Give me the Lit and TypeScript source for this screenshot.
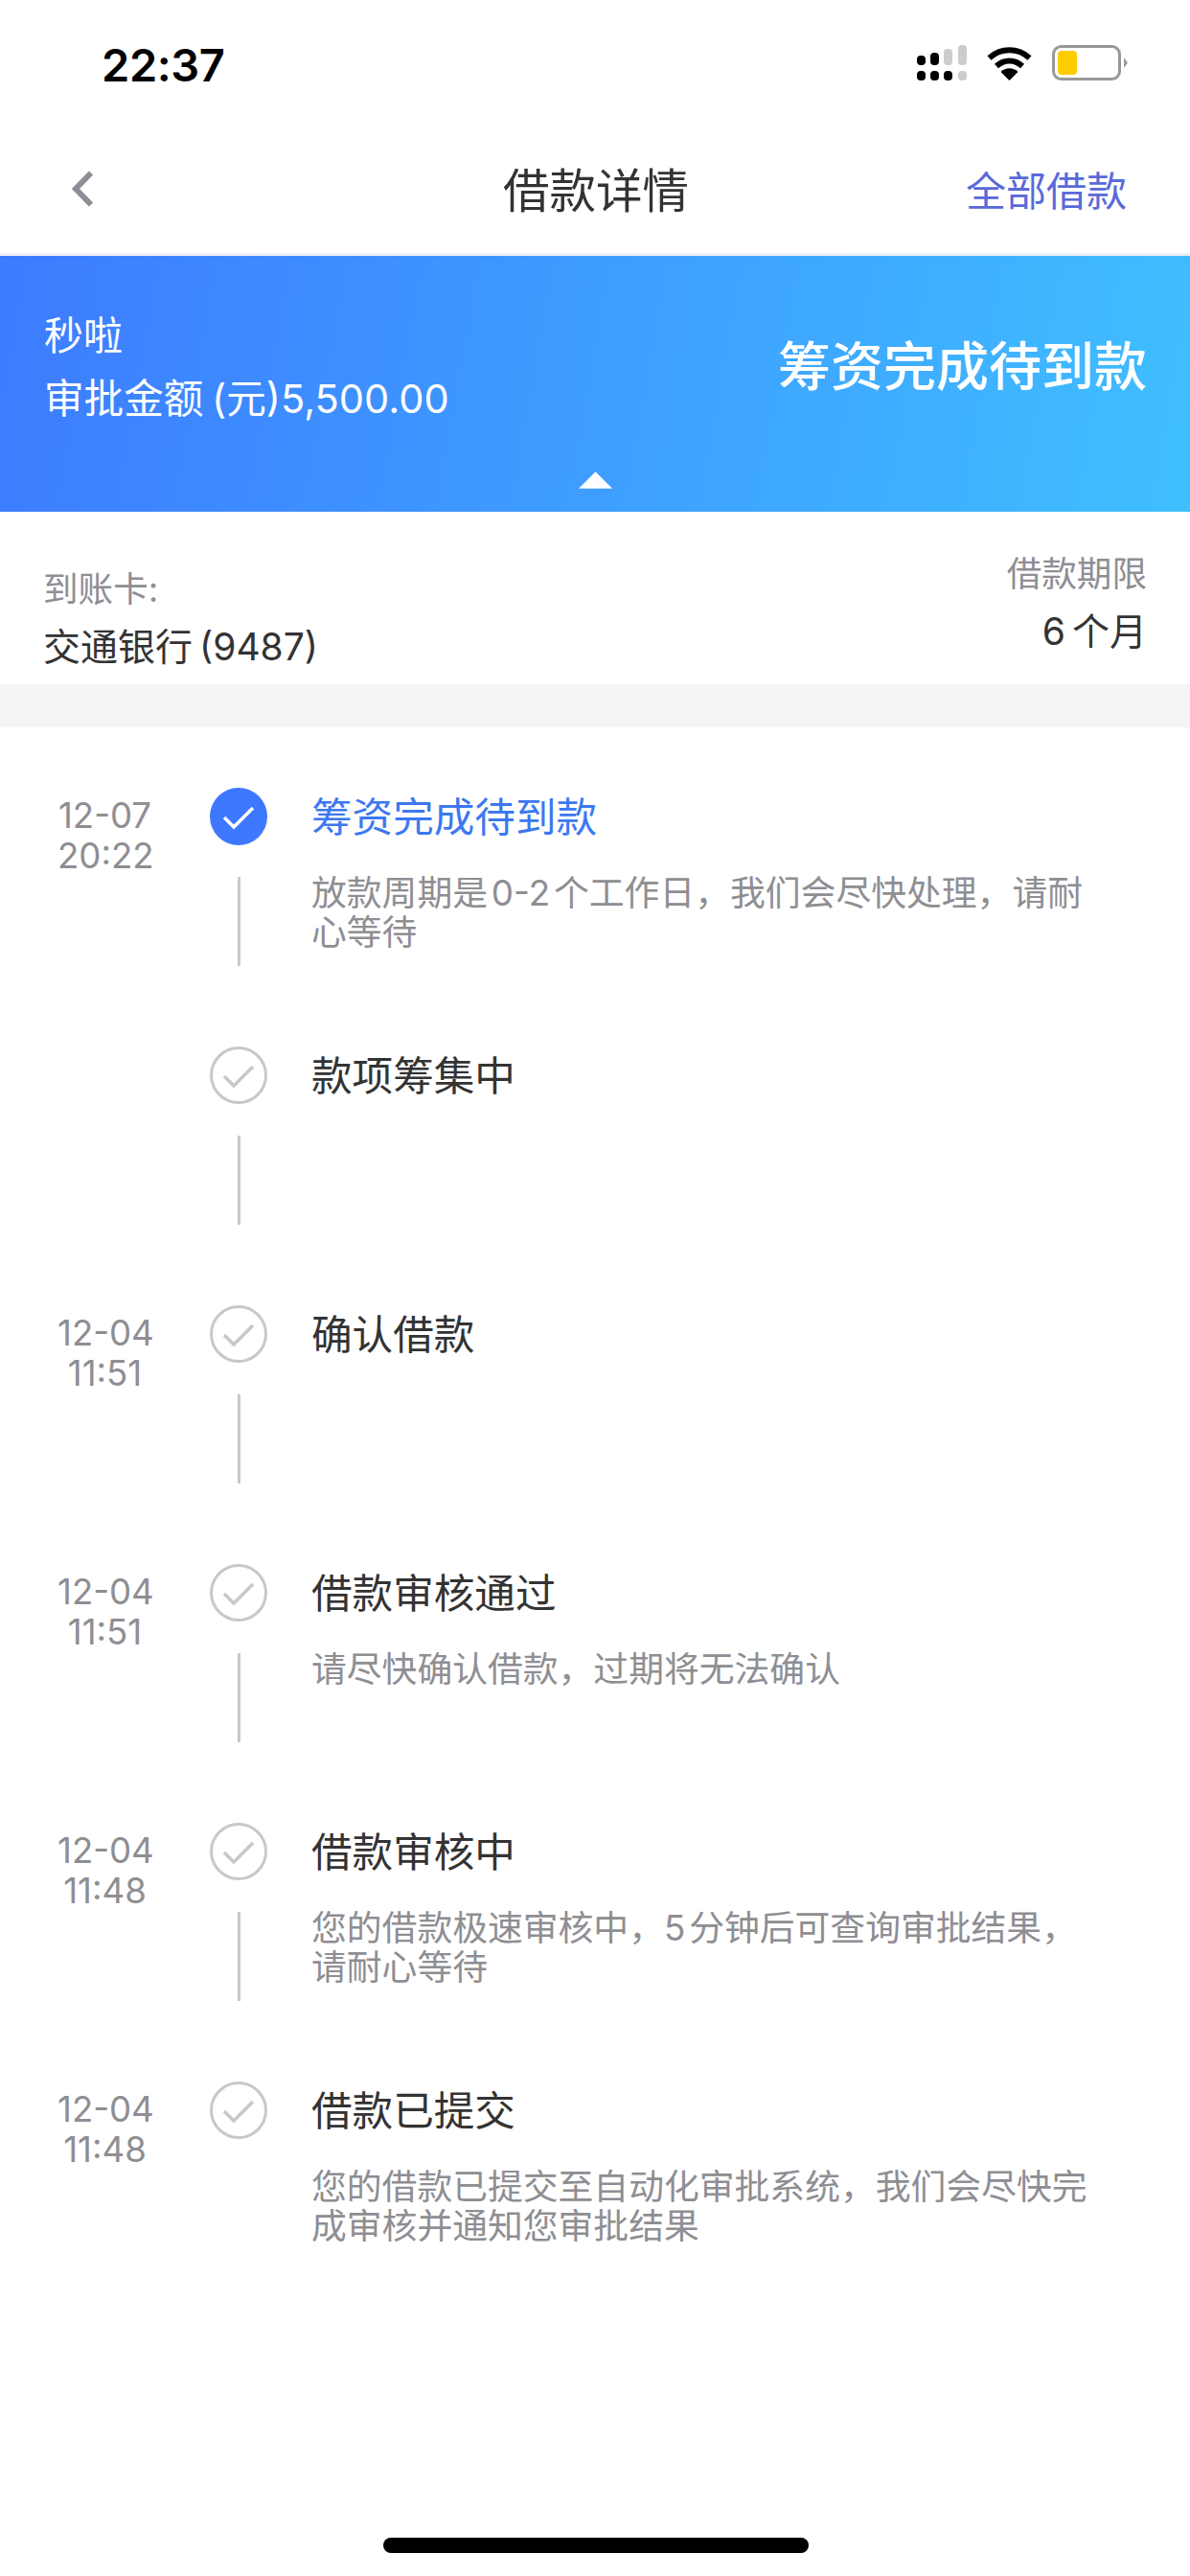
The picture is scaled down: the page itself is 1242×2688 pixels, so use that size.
import { LitElement, html, css, svg } from "lit";
import { customElement } from "lit/decorators.js";

interface Step { date?: string; time?: string; title: string; desc?: string[]; active?: boolean; last?: boolean; }

const STEPS: Step[] = [
  { date: "12-07", time: "20:22", title: "筹资完成待到款", desc: ["放款周期是 0-2 个工作日，我们会尽快处理，请耐", "心等待"], active: true },
  { title: "款项筹集中" },
  { date: "12-04", time: "11:51", title: "确认借款" },
  { date: "12-04", time: "11:51", title: "借款审核通过", desc: ["请尽快确认借款，过期将无法确认"] },
  { date: "12-04", time: "11:48", title: "借款审核中", desc: ["您的借款极速审核中，5 分钟后可查询审批结果，", "请耐心等待"] },
  { date: "12-04", time: "11:48", title: "借款已提交", desc: ["您的借款已提交至自动化审批系统，我们会尽快完", "成审核并通知您审批结果"], last: true },
];

@customElement("app-root")
export class AppRoot extends LitElement {
  static styles = css`
    :host { display: block; width: 1242px; height: 2688px; background: #fff; position: relative; overflow: hidden;
      font-family: Inter, "Noto Sans CJK SC", sans-serif; color: #333; }
    .status { height: 129px; display: flex; align-items: center; justify-content: space-between; padding: 6px 65px 0 106px; box-sizing: border-box; }
    .clock { font: 600 47px Inter, sans-serif; color: #000; letter-spacing: -0.4px; }
    .status-icons { display: flex; align-items: center; gap: 21px; margin-top: -4px; }
    .nav { height: 138px; display: grid; grid-template-columns: 1fr auto 1fr; align-items: center; padding: 0 68px 0 70px; border-bottom: 3px solid #eef0f3; box-sizing: border-box; }
    .back { display: block; margin-left: 2px; }
    .title { font-size: 48.5px; color: #333; margin-top: -2px; }
    .all { justify-self: end; font-size: 42px; color: #5a69d9; margin-right: -2px; }
    .banner { height: 267px; background: linear-gradient(100deg, #3d7bff 0%, #3fbfff 100%); color: #fff; display: flex; justify-content: space-between; align-items: flex-start; padding: 53px 45px 0 46px; box-sizing: border-box; position: relative; }
    .brand { font-size: 41px; line-height: 60px; }
    .amount { font-size: 41.6px; line-height: 60px; margin-top: 6px; word-spacing: -3px; }
    .state { font-size: 55px; font-weight: 500; line-height: 76px; margin-top: 24px; }
    .caret { position: absolute; left: 604px; bottom: 24px; width: 35px; height: 18px; }
    .info { height: 180px; display: flex; justify-content: space-between; padding: 37px 45px 0 45px; box-sizing: border-box; }
    .info-l { padding-top: 19px; }
    .info-r { text-align: right; padding-top: 3px; }
    .label { font-size: 36.6px; color: #8e8e93; line-height: 50px; }
    .value { font-size: 39px; color: #333; line-height: 56px; margin-top: 7px; word-spacing: -4px; }
    .sep { height: 45px; background: #f5f5f5; }
    .timeline { padding-top: 63px; }
    .step { height: 270px; display: grid; grid-template-columns: 129px 60px 1fr; column-gap: 30px; padding-left: 60px; box-sizing: border-box; }
    .when { width: 99px; font-size: 36.6px; line-height: 42px; color: #8e8e93; padding-top: 8px; text-align: center; white-space: nowrap; }
    .rail { display: flex; flex-direction: column; align-items: center; grid-column: 2; }
    .dot { display: block; width: 60px; height: 60px; }
    .line { width: 3px; height: 93px; background: #c8c8c8; margin-top: 33px; }
    .body { margin-left: 16px; }
    .step-title { font-size: 42.6px; line-height: 61px; color: #333; }
    .step.on .step-title { color: #3d78f0; }
    .desc { font-size: 36.8px; line-height: 41px; color: #8e8e93; margin-top: 28px; white-space: nowrap; word-spacing: -6.5px; }
    .home { position: absolute; left: 400px; top: 2648px; width: 444px; height: 16px; border-radius: 8px; background: #000; }
  `;

  private dot(on: boolean) {
    return on
      ? svg`<svg class="dot" viewBox="0 0 60 60"><circle cx="30" cy="30" r="30" fill="#3d78ff"/><path d="M15 31l10 10 20-20" fill="none" stroke="#fff" stroke-width="3.6"/></svg>`
      : svg`<svg class="dot" viewBox="0 0 60 60"><circle cx="30" cy="30" r="28.5" fill="#fff" stroke="#c8c8c8" stroke-width="3"/><path d="M15 31l10 10 20-20" fill="none" stroke="#c8c8c8" stroke-width="3.6"/></svg>`;
  }

  render() {
    return html`
      <div class="status">
        <span class="clock">22:37</span>
        <div class="status-icons">
          <svg width="52" height="37" viewBox="0 0 52 37">
            <g fill="#000"><rect x="0" y="11" width="9" height="10" rx="4"/><rect x="14" y="8" width="9" height="13" rx="4"/><rect x="0" y="27" width="9" height="10" rx="4"/><rect x="14" y="27" width="9" height="10" rx="4"/><rect x="28" y="27" width="9" height="10" rx="4"/></g>
            <g fill="#ccc"><rect x="28" y="4" width="9" height="17" rx="4"/><rect x="43" y="0" width="9" height="21" rx="4"/><rect x="43" y="27" width="9" height="10" rx="4"/></g>
          </svg>
          <svg width="47" height="36" viewBox="0 0 47 36">
            <path d="M2.500 12.500C14.500 1.500 32.500 1.500 44.500 12.500M10 21C18 13.500 29 13.500 37 21" fill="none" stroke="#000" stroke-width="6"/>
            <path d="M14.500 27C19.500 22 27.500 22 32.500 27L23.500 36Z" fill="#000"/>
          </svg>
          <svg width="79" height="37" viewBox="0 0 79 37">
            <rect x="1.500" y="1.500" width="69" height="34" rx="8" fill="#fff" stroke="#999" stroke-width="3"/>
            <rect x="6" y="6" width="20" height="25" rx="4" fill="#ffcc00"/>
            <path d="M75 13l4 5.500-4 5.500z" fill="#999"/>
          </svg>
        </div>
      </div>
      <div class="nav">
        <svg class="back" width="28" height="40" viewBox="0 0 28 40"><path d="M23 3.500L7 20l16 16.500" fill="none" stroke="#8e8e96" stroke-width="6"/></svg>
        <div class="title">借款详情</div>
        <div class="all">全部借款</div>
      </div>
      <div class="banner">
        <div>
          <div class="brand">秒啦</div>
          <div class="amount">审批金额 (元)5,500.00</div>
        </div>
        <div class="state">筹资完成待到款</div>
        <svg class="caret" viewBox="0 0 36 18"><path d="M18 0L36 18H0Z" fill="#fff"/></svg>
      </div>
      <div class="info">
        <div class="info-l">
          <div class="label">到账卡:</div>
          <div class="value">交通银行 (9487)</div>
        </div>
        <div class="info-r">
          <div class="label">借款期限</div>
          <div class="value">6 个月</div>
        </div>
      </div>
      <div class="sep"></div>
      <div class="timeline">
        ${STEPS.map(s => html`
          <div class="step ${s.active ? "on" : ""}">
            <div class="when">${s.date ? html`${s.date}<br />${s.time}` : ""}</div>
            <div class="rail">
              ${this.dot(!!s.active)}
              ${s.last ? "" : html`<div class="line"></div>`}
            </div>
            <div class="body">
              <div class="step-title">${s.title}</div>
              ${s.desc ? html`<div class="desc">${s.desc.map(d => html`<div>${d}</div>`)}</div>` : ""}
            </div>
          </div>`)}
      </div>
      <div class="home"></div>
    `;
  }
}
